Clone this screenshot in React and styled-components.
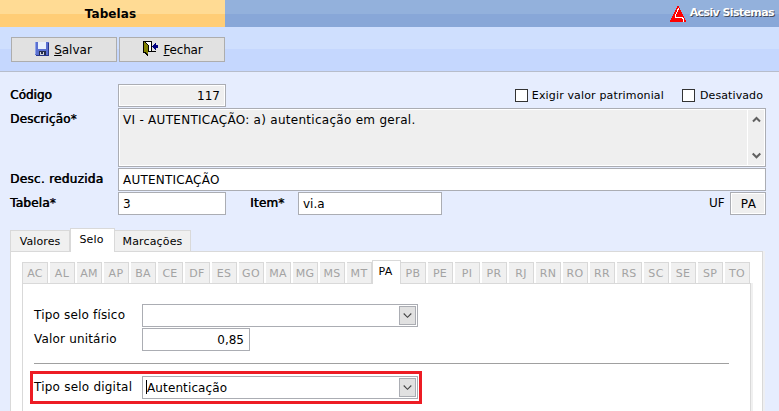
import React from 'react';
import styled, { createGlobalStyle } from 'styled-components';

const Global = createGlobalStyle`
  * { box-sizing: border-box; }
  body { margin: 0; overflow: hidden; background: #e6edfe; }
`;
const Page = styled.div`
  width: 779px; height: 411px; overflow: hidden;
  display: flex; flex-direction: column;
  background: #e6edfe; color: #000;
  font: 12px/16px "DejaVu Sans", Verdana, sans-serif;
`;
const Text = styled.span`
  white-space: nowrap;
  letter-spacing: ${(p) => p.$ls || 0}px;
  font-weight: ${(p) => (p.$bold ? 700 : 400)};
`;
const Required = styled(Text)`text-shadow: 0.6px 0 0 #000;`;
const Header = styled.header`
  flex: none; height: 27px; display: flex; justify-content: space-between;
  background: linear-gradient(#93b1dc 0 14px, #88a7d8 14px);
`;
const Title = styled.div`
  width: 225px; padding: 6px 4px 0 0; text-align: center;
  background: linear-gradient(#ffdb94 0 14px, #ffcd76 14px);
`;
const Brand = styled.div`
  display: flex; gap: 4px; padding: 6px 5px 0 0; color: #fff; font-size: 11px; line-height: 14px;
  text-shadow: 1px 1px 0 #444b58;
`;
const Toolbar = styled.div`
  flex: none; height: 45px; padding: 10px 0 0 11px; display: flex; gap: 2px;
  border-bottom: 1px solid #b7bdcb;
  background: linear-gradient(#cfdffe 0 22px, #c5d7fe 22px);
`;
const ToolButton = styled.button`
  width: 106px; height: 25px; padding: 0 ${(p) => p.$pr || 0}px 0 ${(p) => p.$pl || 0}px;
  display: flex; align-items: center; justify-content: center; gap: 5px;
  border: 1px solid #adadad; background: #e1e1e1; font: inherit; color: #000;
  svg { margin-bottom: 2px; }
`;
const Form = styled.main`
  flex: none; padding: 12px 13px 0 10px; display: flex; flex-direction: column; gap: 1px;
`;
const Row = styled.div`display: flex; height: ${(p) => p.$h || 23}px;`;
const Label = styled.label`
  flex: none; width: ${(p) => p.$w || 108}px; margin-left: ${(p) => p.$gap || 0}px; padding-top: 3px;
`;
const Field = styled.div`
  flex: none; width: ${(p) => p.$w}px; height: ${(p) => p.$h || 23}px; display: flex;
  justify-content: ${(p) => p.$align || 'flex-start'};
  padding: 3px ${(p) => p.$pr ?? 5}px 0 4px;
  border: 1px solid #abadb3; background: ${(p) => (p.$off ? '#efefef' : '#fff')};
  box-shadow: inset 0 0 0 1px #fff;
`;
const Scroll = styled.div`
  width: 17px; height: 55px; margin-top: -2px; padding: 6px 0 6px; display: flex; flex-direction: column;
  justify-content: space-between; align-items: center; border-left: 1px solid #fff;
`;
const Checks = styled.div`display: flex; margin-left: auto; gap: 18px; padding: 5px 3px 0 0; font-size: 11px;`;
const Check = styled.label`display: flex; gap: ${(p) => p.$gap}px; line-height: 14px;`;
const Box = styled.span`width: 13px; height: 13px; background: #fff; border: 1px solid #333;`;
const Tabs = styled.div`
  display: flex; align-items: flex-end; height: 24px; margin: 12px 0 0 10px; flex: none;
  position: relative; z-index: 1; font-size: 11px;
`;
const Tab = styled.div`
  width: ${(p) => p.$w}px; height: ${(p) => (p.$on ? 24 : 21)}px; margin-bottom: ${(p) => (p.$on ? -1 : 0)}px;
  padding-top: 3px; padding-right: ${(p) => (p.$on ? 2 : 0)}px; text-align: center;
  background: ${(p) => (p.$on ? '#fff' : '#f0f0f0')};
  border: 1px solid #d9d9d9; border-bottom: 0; border-left-width: ${(p) => (p.$join ? 0 : 1)}px;
`;
const Panel = styled.section`
  flex: 1; margin: 0 0 0 10px; width: 753px; padding: 7px 11px 0;
  display: flex; flex-direction: column;
  background: #fff; border: 1px solid #d9d9d9; border-bottom: 0; box-shadow: 2px 0 #eeeff2;
`;
const States = styled.div`
  display: flex; align-items: flex-end; gap: 2px; height: 24px; flex: none;
  position: relative; z-index: 1; font-size: 11px;
`;
const State = styled.div`
  flex: none; width: ${(p) => (p.$on ? 29 : p.$edge ? 26 : 25)}px; height: ${(p) => (p.$on ? 24 : 21)}px;
  margin: ${(p) => (p.$on ? '0 -2px -1px' : '0')};
  padding: 3px ${(p) => (p.$on ? 2 : 0)}px 0 0; text-align: center;
  color: ${(p) => (p.$on ? '#000' : '#a3a3a3')};
  background: ${(p) => (p.$on ? '#fff' : '#f0f0f0')};
  border: solid #d9d9d9; border-width: 1px 1px 0 ${(p) => (p.$edge || p.$on ? 1 : 0)}px;
`;
const Inner = styled.div`
  flex: 1; width: 729px; padding: 20px 21px 0 11px;
  border: 1px solid #d9d9d9; border-bottom: 0; box-shadow: 2px 0 #f0f0f0;
`;
const Stack = styled.div`display: flex; flex-direction: column; gap: 1px;`;
const Rule = styled.hr`height: 1px; margin: 12px 0 7px; border: 0; background: #a0a0a0;`;
const Highlight = styled.div`
  width: 392px; height: 33px; margin-left: -4px; padding: 2px 1px; display: flex; border: 3px solid #ed1c24;
`;
const Drop = styled.span`
  flex: none; width: 17px; height: 19px; margin: -2px -4px 0 auto; display: grid; place-items: center;
  border: 1px solid #abadb3; background: #e1e1e1;
`;
const Caret = styled.span`width: 1px; height: 14px; margin-left: -1px; background: #000;`;
const Icon = styled.svg`display: block; flex: none;`;

const Chevron = ({ up, bold }) => (
  <Icon width="9" height="7" viewBox="0 0 9 7" fill="none" stroke={bold ? '#606060' : '#444'} strokeWidth={bold ? 2 : 1.1}>
    <path d={up ? 'M1 5.5 4.5 2 8 5.5' : 'M.7 1.5 4.5 5.3 8.3 1.5'} />
  </Icon>
);
const SaveIcon = () => (
  <Icon width="14" height="14" viewBox="0 0 14 14" shapeRendering="crispEdges">
    <path fill="#5a70d0" d="M0 0h14v14H1L0 13z" />
    <path fill="#8fa3e8" d="M0 0h1v12H0z" />
    <path fill="#27368c" d="M13 1h1v13H1v-1h12z" />
    <path fill="#e8f0fc" d="M3 0h8v7H3z" />
    <path fill="#252c4c" d="M4 9h7v4H4z" />
    <path fill="#d0d4dc" d="M5 10h4v3H5z" />
    <path fill="#252c4c" d="M6 10h2v2H6z" />
  </Icon>
);
const DoorIcon = () => (
  <Icon width="16" height="15" viewBox="0 0 16 15" shapeRendering="crispEdges">
    <path fill="#000" d="M0 0h9v10h4v1H5v4H4v-1H3v-1H2v-1H0z" />
    <path fill="#fff" d="M3 1h5v9H6V4H5V3H4V2H3z" />
    <path fill="#808000" d="M1 1h1v1h1v1h1v1h1v9H4v-1H3v-1H1z" />
    <path fill="#000080" d="M9 5h1V4h1V3h1V2h1v2h2v3h-2v2h-1V8h-1V7h-1V6H9z" />
  </Icon>
);
const Logo = () => (
  <Icon width="16" height="16" viewBox="0 0 16 16" shapeRendering="crispEdges">
    <path fill="#f00" d="M7.5 0h1L16 15v1H0v-1z" />
    <path fill="none" stroke="#fff" d="M8 1.5v2L5 10.5v1h7.5l1 2v2.5" />
  </Icon>
);

const Select = ({ children }) => (
  <Field $w={276}>{children}<Drop><Chevron /></Drop></Field>
);

const states = 'AC AL AM AP BA CE DF ES GO MA MG MS MT PA PB PE PI PR RJ RN RO RR RS SC SE SP TO'.split(' ');

export default function App() {
  return (
    <Page>
      <Global />
      <Header>
        <Title><Text $bold $ls={0.1}>Tabelas</Text></Title>
        <Brand><Logo /><Text $bold $ls={-0.6}>Acsiv Sistemas</Text></Brand>
      </Header>
      <Toolbar>
        <ToolButton $pr={1}><SaveIcon /><Text><u>S</u>alvar</Text></ToolButton>
        <ToolButton $pl={1}><DoorIcon /><Text $ls={-0.2}><u>F</u>echar</Text></ToolButton>
      </Toolbar>
      <Form>
        <Row>
          <Label><Required>Código</Required></Label>
          <Field $w={108} $off $align="flex-end"><Text>117</Text></Field>
          <Checks>
            <Check $gap={4}><Box /><Text $ls={0.15}>Exigir valor patrimonial</Text></Check>
            <Check $gap={5}><Box /><Text $ls={0.1}>Desativado</Text></Check>
          </Checks>
        </Row>
        <Row $h={59}>
          <Label><Required $ls={0.15}>Descrição*</Required></Label>
          <Field $w={648} $h={59} $off $pr={1} $align="space-between">
            <Text $ls={0.28}>VI - AUTENTICAÇÃO: a) autenticação em geral.</Text>
            <Scroll><Chevron up bold /><Chevron bold /></Scroll>
          </Field>
        </Row>
        <Row>
          <Label><Required $ls={0.3}>Desc. reduzida</Required></Label>
          <Field $w={648}><Text $ls={0.22}>AUTENTICAÇÃO</Text></Field>
        </Row>
        <Row>
          <Label><Required $ls={0.2}>Tabela*</Required></Label>
          <Field $w={108}><Text>3</Text></Field>
          <Label $gap={24} $w={48}><Required $ls={0.2}>Item*</Required></Label>
          <Field $w={144}><Text>vi.a</Text></Field>
          <Label $gap={267} $w={21}><Text>UF</Text></Label>
          <Field $w={36} $off $align="center" $pr={3}><Text $ls={0.3}>PA</Text></Field>
        </Row>
      </Form>
      <Tabs>
        <Tab $w={60}><Text $ls={0.1}>Valores</Text></Tab>
        <Tab $w={45} $on><Text $ls={0.15}>Selo</Text></Tab>
        <Tab $w={76} $join><Text $ls={0.15}>Marcações</Text></Tab>
      </Tabs>
      <Panel>
        <States>
          {states.map((s, i) => <State key={s} $on={s === 'PA'} $edge={i === 0}><Text $ls={0.3}>{s}</Text></State>)}
        </States>
        <Inner>
          <Stack>
            <Row><Label><Text $ls={0.18}>Tipo selo físico</Text></Label><Select /></Row>
            <Row><Label><Text $ls={0.18}>Valor unitário</Text></Label><Field $w={108} $align="flex-end"><Text>0,85</Text></Field></Row>
          </Stack>
          <Rule />
          <Highlight>
            <Label><Text $ls={0.22}>Tipo selo digital</Text></Label>
            <Select><Caret /><Text $ls={0.12}>Autenticação</Text></Select>
          </Highlight>
        </Inner>
      </Panel>
    </Page>
  );
}
